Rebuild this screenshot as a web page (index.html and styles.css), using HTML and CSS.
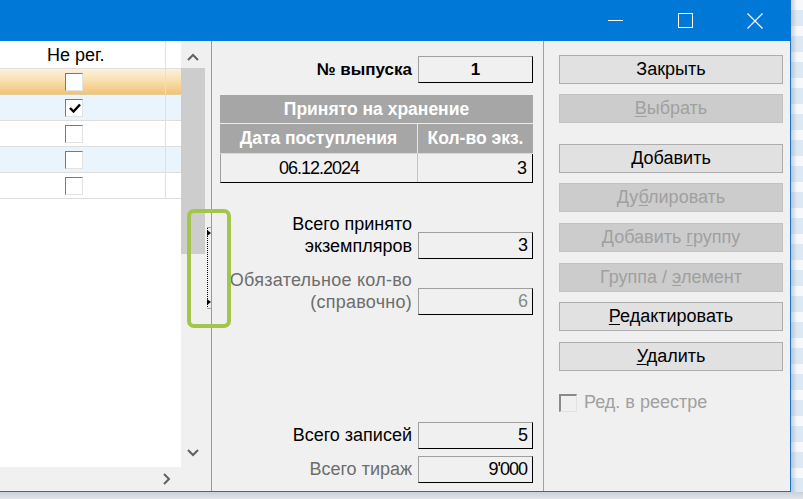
FILE: index.html
```html
<!DOCTYPE html>
<html lang="ru">
<head>
<meta charset="utf-8">
<title>Выпуски</title>
<link rel="stylesheet" href="styles.css">
</head>
<body>
<div class="screen">
  <div class="top">
    <div class="window">
      <div class="titlebar">
        <div class="cap"><svg width="15" height="1" viewBox="0 0 15 1"><rect x="0" y="0" width="15" height="1" fill="#fff"/></svg></div>
        <div class="cap"><svg width="15" height="15" viewBox="0 0 15 15"><rect x="0.5" y="0.5" width="14" height="14" fill="none" stroke="#fff" stroke-width="1"/></svg></div>
        <div class="cap"><svg width="16" height="16" viewBox="0 0 16 16"><path d="M0.5 0.5 L15.5 15.5 M15.5 0.5 L0.5 15.5" stroke="#fff" stroke-width="1.1" fill="none"/></svg></div>
      </div>
      <div class="content">
        <div class="left">
          <div class="left-main">
            <div class="grid">
              <div class="grid-head"><div class="cell head-cell">Не рег.</div></div>
              <div class="grow sel"><div class="cell"><span class="chk"></span></div></div>
              <div class="grow alt"><div class="cell"><span class="chk"><svg width="12" height="10" viewBox="0 0 12 10"><path d="M1 5 L4.5 8.5 L11 1.5" stroke="#000" stroke-width="2.4" fill="none"/></svg></span></div></div>
              <div class="grow"><div class="cell"><span class="chk"></span></div></div>
              <div class="grow alt"><div class="cell"><span class="chk"></span></div></div>
              <div class="grow"><div class="cell"><span class="chk"></span></div></div>
            </div>
            <div class="vscroll">
              <div class="sb-up"><svg width="12" height="8" viewBox="0 0 12 8"><path d="M1 7 L6 2 L11 7" stroke="#606060" stroke-width="2" fill="none"/></svg></div>
              <div class="thumb"></div>
              <div class="track"></div>
              <div class="sb-down"><svg width="12" height="8" viewBox="0 0 12 8"><path d="M1 1 L6 6 L11 1" stroke="#606060" stroke-width="2" fill="none"/></svg></div>
            </div>
          </div>
          <div class="hscroll">
            <div class="hs-bar"><svg width="8" height="12" viewBox="0 0 8 12"><path d="M1 1 L6 6 L1 11" stroke="#606060" stroke-width="2" fill="none"/></svg></div>
            <div class="corner"></div>
          </div>
        </div>
        <div class="splitter"><div class="grip"><span class="tick"></span><span class="dots"></span><span class="tick"></span></div></div>
        <div class="middle">
          <div class="frow r-issue">
            <div class="lbl bold">№ выпуска</div>
            <div class="box center bold">1</div>
          </div>
          <div class="tbl">
            <div class="th1">Принято на хранение</div>
            <div class="th2"><div class="c1">Дата поступления</div><div class="c2">Кол-во экз.</div></div>
            <div class="td"><div class="c1 digits">06.12.2024</div><div class="c2 num digits">3</div></div>
          </div>
          <div class="frow r-total">
            <div class="lbl two">Всего принято<br>экземпляров</div>
            <div class="box num digits">3</div>
          </div>
          <div class="frow r-req">
            <div class="lbl two muted wide">Обязательное кол-во<br>(справочно)</div>
            <div class="box num digits muted-val">6</div>
          </div>
          <div class="frow r-recs">
            <div class="lbl">Всего записей</div>
            <div class="box num digits">5</div>
          </div>
          <div class="frow r-circ">
            <div class="lbl muted">Всего тираж</div>
            <div class="box num digits">9'000</div>
          </div>
        </div>
        <div class="right">
          <div class="btn"><span>Закрыть</span></div>
          <div class="btn off"><span><u>В</u>ыбрать</span></div>
          <div class="btn gap"><span><u>Д</u>обавить</span></div>
          <div class="btn off"><span>Ду<u>б</u>лировать</span></div>
          <div class="btn off nudge"><span>Добавить <u>г</u>руппу</span></div>
          <div class="btn off nudge"><span>Группа / <u>э</u>лемент</span></div>
          <div class="btn"><span><u>Р</u>едактировать</span></div>
          <div class="btn nudge"><span><u>У</u>далить</span></div>
          <div class="chkrow"><span class="chk2"></span><span class="chklbl">Ред. в реестре</span></div>
        </div>
        <div class="mark"></div>
      </div>
    </div>
    <div class="side"></div>
  </div>
  <div class="shadow"></div>
</div>
</body>
</html>
```
FILE: styles.css
```css
* { box-sizing: border-box; }
html, body { margin: 0; padding: 0; }
body {
  width: 803px; height: 499px; overflow: hidden;
  background: #dadfe5;
  font-family: "Liberation Sans", Arial, sans-serif;
  font-size: 18px; color: #000;
}
.screen { display: flex; flex-direction: column; width: 803px; height: 499px; }
.top { display: flex; height: 492px; flex: none; }
.window {
  width: 791px; height: 492px; flex: none;
  border-right: 1px solid #1a73c9; border-bottom: 1px solid #1a73c9;
  display: flex; flex-direction: column; background: #f0f0f0;
}
.titlebar { height: 41px; flex: none; background: #0078d7; display: flex; justify-content: flex-end; }
.cap { width: 70px; display: flex; align-items: center; justify-content: center; }
.cap svg { display: block; }
.content { flex: 1; display: flex; position: relative; min-height: 0; }

/* left grid */
.left { width: 205px; flex: none; display: flex; flex-direction: column; }
.left-main { height: 426px; display: flex; flex: none; }
.grid { width: 181px; background: #fff; flex: none; }
.grid-head { height: 28px; border-bottom: 1px solid #dedede; display: flex; }
.cell { width: 166px; height: 100%; border-right: 1px solid #e0e0e0; display: flex; align-items: center; }
.head-cell { padding-left: 47px; padding-top: 1px; }
.grow { height: 26px; border-bottom: 1px solid #dedede; display: flex; }
.grow.alt { background: #eaf4fc; }
.grow.sel { background: linear-gradient(#fcf1dd, #f8deac 50%, #f2c274); border-bottom-color: #e6cf9f; }
.chk {
  width: 18px; height: 18px; margin-left: 65px; background: #fff;
  border-top: 1px solid #7a7a7a; border-left: 1px solid #7a7a7a;
  border-right: 1px solid #e2e2e2; border-bottom: 1px solid #e2e2e2;
  display: flex; align-items: center; justify-content: center;
}
.chk svg { display: block; margin-left: 1px; }
.vscroll { width: 24px; flex: none; background: #f0f0f0; display: flex; flex-direction: column; }
.sb-up { height: 27px; flex: none; display: flex; justify-content: center; padding-top: 12px; }
.thumb { height: 186px; flex: none; background: #cdcdcd; }
.track { flex: 1; }
.sb-down { height: 24px; flex: none; display: flex; justify-content: center; padding-top: 6px; }
.sb-up svg, .sb-down svg { display: block; }
.hscroll { height: 24px; flex: none; display: flex; background: #f0f0f0; }
.hs-bar { width: 181px; display: flex; justify-content: flex-end; padding-right: 10px; padding-top: 6px; }
.hs-bar svg { display: block; }
.corner { flex: 1; }

/* splitter */
.splitter { width: 7px; flex: none; border-right: 1px solid #9a9a9a; background: #f0f0f0; }
.grip {
  margin-top: 186px; margin-left: 2px;
  width: 5px; height: 82px;
  display: flex; flex-direction: column;
}
.tick { height: 1px; width: 5px; background: #a0a0a0; flex: none; }
.dots {
  flex: 1; position: relative; width: 1px;
  background: repeating-linear-gradient(#000 0 1px, transparent 1px 2px);
}
.dots::before, .dots::after {
  content: ""; position: absolute; left: 0;
  border-top: 3px solid transparent; border-bottom: 3px solid transparent;
  border-left: 4px solid #000;
}
.dots::before { top: 2px; }
.dots::after { bottom: 3px; }

/* middle */
.middle {
  width: 332px; flex: none; border-right: 1px solid #a0a0a0;
  padding: 15px 10px 8px 8px;
  display: flex; flex-direction: column;
}
.frow { display: flex; justify-content: flex-end; align-items: center; gap: 6px; }
.lbl { text-align: right; white-space: nowrap; }
.lbl.two { line-height: 22px; }
.lbl.wide { letter-spacing: 0.25px; }
.bold { font-weight: bold; font-size: 17px; }
.muted { color: #6d6d6d; }
.muted-val { color: #8a8a8a; }
.digits { letter-spacing: -1px; }
.box {
  width: 115px; height: 27px; flex: none; background: #f0f0f0;
  border-top: 1px solid #a0a0a0; border-left: 1px solid #a0a0a0;
  border-right: 1px solid #000; border-bottom: 1px solid #000;
  display: flex; align-items: center; padding: 0 5px;
}
.box.center { justify-content: center; }
.box.num { justify-content: flex-end; }
.r-issue { height: 27px; flex: none; }
.tbl { margin-top: 12px; width: 313px; flex: none; }
.th1 {
  height: 29px; background: #a6a6a6; color: #fff; font-weight: bold; font-size: 17.5px;
  border-bottom: 1px solid #ececec;
  display: flex; align-items: center; justify-content: center;
}
.th2 {
  height: 30px; background: #a6a6a6; color: #fff; font-weight: bold; font-size: 17.5px;
  border-bottom: 1px solid #d8d8d8; display: flex;
}
.td {
  height: 29px; display: flex; background: #f0f0f0;
  border-left: 1px solid #a0a0a0; border-right: 1px solid #000; border-bottom: 1px solid #000;
}
.c1 { width: 198px; flex: none; border-right: 1px solid #e6e6e6; display: flex; align-items: center; justify-content: center; }
.c2 { flex: 1; display: flex; align-items: center; justify-content: center; }
.td .c1 { width: 197px; border-right-color: #c4c4c4; }
.c2.num { justify-content: flex-end; padding-right: 6px; }
.r-total { margin-top: 30px; align-items: flex-end; flex: none; }
.r-total .lbl, .r-req .lbl { margin-bottom: 2px; }
.r-req { margin-top: 10px; align-items: flex-end; flex: none; }
.r-recs { margin-top: auto; flex: none; }
.r-circ { margin-top: 7px; flex: none; }

/* right */
.right {
  flex: 1; padding: 14px 7px 0 15px;
  display: flex; flex-direction: column; gap: 10px;
}
.btn {
  height: 29px; flex: none; background: #e1e1e1; border: 1px solid #adadad;
  display: flex; align-items: center; justify-content: center;
}
.btn span { white-space: pre; }
.btn.off { background: #cccccc; border-color: #c2c2c2; color: #a0a0a0; }
.btn.gap { margin-top: 11px; }
.btn.nudge { margin-top: 1px; }
.btn u { text-underline-offset: 2px; }
.chkrow { margin-top: 11px; display: flex; align-items: center; gap: 7px; }
.chk2 {
  width: 18px; height: 18px; background: #f0f0f0;
  border-top: 2px solid #8a8a8a; border-left: 2px solid #8a8a8a;
  border-right: 1px solid #e2e2e2; border-bottom: 1px solid #e2e2e2;
}
.chklbl { color: #a0a0a0; }

/* annotation */
.mark {
  position: absolute; left: 187px; top: 168px; width: 44px; height: 119px;
  border: 4px solid #a1c64a; border-radius: 7px;
}

/* background beyond window */
.side {
  flex: 1;
  background:
    linear-gradient(90deg, rgba(120,130,145,0.35), rgba(120,130,145,0) 6px),
    repeating-linear-gradient(#f6f8fb 0 10px, #dce8f3 10px 26px);
}
.shadow { flex: 1; background: linear-gradient(#c9d0d8, #e3e7ec); }
```
